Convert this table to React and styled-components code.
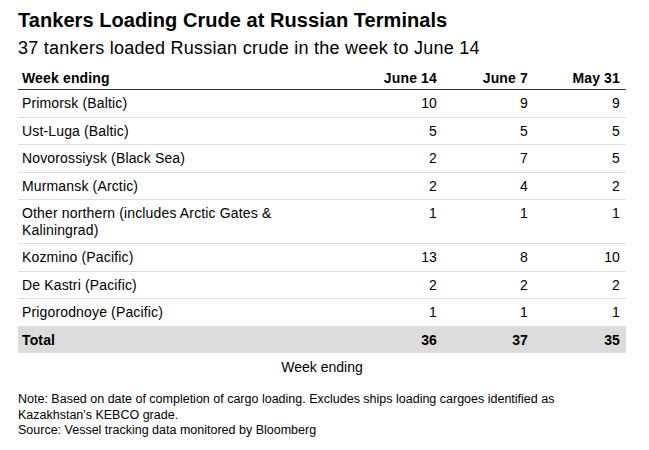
import React from "react";
import styled, { createGlobalStyle } from "styled-components";

const rows = [
  { label: "Primorsk (Baltic)", values: [10, 9, 9] },
  { label: "Ust-Luga (Baltic)", values: [5, 5, 5] },
  { label: "Novorossiysk (Black Sea)", values: [2, 7, 5] },
  { label: "Murmansk (Arctic)", values: [2, 4, 2] },
  { label: "Other northern (includes Arctic Gates & Kaliningrad)", values: [1, 1, 1] },
  { label: "Kozmino (Pacific)", values: [13, 8, 10] },
  { label: "De Kastri (Pacific)", values: [2, 2, 2] },
  { label: "Prigorodnoye (Pacific)", values: [1, 1, 1] },
];

const weeks = ["June 14", "June 7", "May 31"];
const totals = [36, 37, 35];

const App = () => {
  return (
    <>
      <GlobalStyle />
      <Page>
        <Title>Tankers Loading Crude at Russian Terminals</Title>
        <Subtitle>37 tankers loaded Russian crude in the week to June 14</Subtitle>

        <Table>
          <colgroup>
            <col style={{ width: 334 }} />
            <col style={{ width: 91 }} />
            <col style={{ width: 91 }} />
            <col style={{ width: 92 }} />
          </colgroup>
          <thead>
            <tr>
              <HeadCell>Week ending</HeadCell>
              {weeks.map((w) => (
                <HeadCell key={w} $numeric>
                  {w}
                </HeadCell>
              ))}
            </tr>
          </thead>
          <tbody>
            {rows.map((row) => (
              <tr key={row.label}>
                <Cell>{row.label}</Cell>
                {row.values.map((v, i) => (
                  <Cell key={i} $numeric>
                    {v}
                  </Cell>
                ))}
              </tr>
            ))}
            <TotalRow>
              <TotalCell>Total</TotalCell>
              {totals.map((t, i) => (
                <TotalCell key={i} $numeric>
                  {t}
                </TotalCell>
              ))}
            </TotalRow>
          </tbody>
        </Table>

        <Caption>Week ending</Caption>

        <Notes>
          <p>
            Note: Based on date of completion of cargo loading. Excludes ships loading cargoes
            identified as Kazakhstan's KEBCO grade.
          </p>
          <p>Source: Vessel tracking data monitored by Bloomberg</p>
        </Notes>
      </Page>
    </>
  );
};

const GlobalStyle = createGlobalStyle`
  html, body {
    margin: 0;
    padding: 0;
    background: #ffffff;
  }

  body {
    font-family: "Liberation Sans", Arial, sans-serif;
    color: #000000;
  }
`;

const Page = styled.div`
  width: 608px;
  padding: 8px 0 0 18px;
`;

const Title = styled.h1`
  margin: 0;
  font-size: 20px;
  line-height: 24px;
  font-weight: 700;
  letter-spacing: 0.05px;
`;

const Subtitle = styled.h2`
  margin: 4px 0 0;
  font-size: 18px;
  line-height: 24px;
  font-weight: 400;
  letter-spacing: 0.25px;
`;

const Table = styled.table`
  margin-top: 10px;
  width: 608px;
  border-collapse: collapse;
  table-layout: fixed;
  font-size: 14px;
  letter-spacing: 0.15px;
`;

const HeadCell = styled.th`
  padding: 0 ${(p) => (p.$numeric ? "6px" : "30px")} 2px 4px;
  line-height: 17px;
  font-weight: 700;
  text-align: ${(p) => (p.$numeric ? "right" : "left")};
  border-bottom: 1px solid #333333;
`;

const Cell = styled.td`
  padding: 5px ${(p) => (p.$numeric ? "6px" : "30px")} 5px 4px;
  line-height: 16.5px;
  vertical-align: top;
  text-align: ${(p) => (p.$numeric ? "right" : "left")};
  border-bottom: 1px solid #dedede;
`;

const TotalRow = styled.tr`
  background: #dcdcdc;
`;

const TotalCell = styled.td`
  padding: 5px ${(p) => (p.$numeric ? "6px" : "30px")} 5px 4px;
  line-height: 16.5px;
  font-weight: 700;
  text-align: ${(p) => (p.$numeric ? "right" : "left")};
`;

const Caption = styled.div`
  margin-top: 6px;
  font-size: 14px;
  line-height: 17px;
  text-align: center;
`;

const Notes = styled.div`
  margin-top: 16px;
  max-width: 570px;
  font-size: 12.5px;
  line-height: 15.5px;

  p {
    margin: 0;
  }
`;

export default App;
